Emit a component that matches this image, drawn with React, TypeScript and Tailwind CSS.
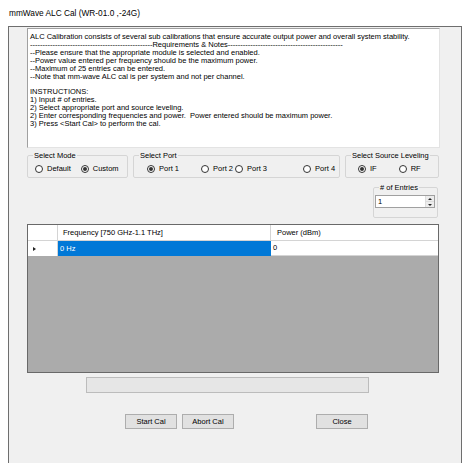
import React from 'react';

const FONT = "font-['Liberation_Sans',Arial,sans-serif]";

const Radio: React.FC<{ checked?: boolean; label: string; className?: string }> = ({ checked, label, className }) => (
  <div className={`flex items-center gap-[4px] shrink-0 whitespace-nowrap ${className ?? ''}`}>
    <span className="w-[8px] h-[8px] rounded-full border border-[#333333] bg-white flex items-center justify-center">
      {checked && <span className="w-[4px] h-[4px] rounded-full bg-[#333333]" />}
    </span>
    <span>{label}</span>
  </div>
);

const Group: React.FC<{ title: string; className?: string; children: React.ReactNode }> = ({ title, className, children }) => (
  <fieldset className={`min-w-0 border border-[#d5d5d5] rounded-[2px] ${className ?? ''}`}>
    <legend className="ml-[5px] px-[1px] leading-[9px] whitespace-nowrap">{title}</legend>
    {children}
  </fieldset>
);

const Button: React.FC<{ label: string; className?: string }> = ({ label, className }) => (
  <button className={`w-[52px] h-[15px] bg-[#e1e1e1] border border-[#adadad] flex items-center justify-center ${className ?? ''}`}>
    {label}
  </button>
);

const notes = [
  'ALC Calibration consists of several sub calibrations that ensure accurate output power and overall system stability.',
  '-'.repeat(49) + 'Requirements & Notes' + '-'.repeat(46),
  '--Please ensure that the appropriate module is selected and enabled.',
  '--Power value entered per frequency should be the maximum power.',
  '--Maximum of 25 entries can be entered.',
  '--Note that mm-wave ALC cal is per system and not per channel.',
  '\u00a0',
  'INSTRUCTIONS:',
  '1) Input # of entries.',
  '2) Select appropriate port and source leveling.',
  '2) Enter corresponding frequencies and power.  Power entered should be maximum power.',
  '3) Press <Start Cal> to perform the cal.',
];

export default function App() {
  return (
    <div className={`w-[470px] h-[463px] bg-white text-[#000000] text-[7.5px] overflow-hidden ${FONT}`}>
      <div className="h-[26px] pl-[9px] pt-[1px] flex items-center text-[8.3px]">mmWave ALC Cal (WR-01.0 ,-24G)</div>
      <div className="ml-[8px] w-[454px] h-[437px] border-t border-l border-r border-[#6e6e6e] bg-[#f0f0f0] pl-[18px] pt-[1px]">
        {/* notes box */}
        <div className="w-[413px] h-[120px] bg-white border-t border-l border-[#a0a0a0] border-r border-b border-r-[#e3e3e3] border-b-[#e3e3e3] pl-[2px] pt-[4px] leading-[7.9px] whitespace-pre overflow-hidden">
          {notes.map((l, i) => (
            <div key={i}>{l}</div>
          ))}
        </div>

        <div className="flex gap-[5px] mt-[3px] w-[412px]">
          <Group title="Select Mode" className="w-[101px] h-[27px] shrink-0">
            <div className="flex pl-[7px] pt-[3px]">
              <Radio label="Default" />
              <Radio label="Custom" checked className="ml-[10px]" />
            </div>
          </Group>
          <Group title="Select Port" className="w-[207px] h-[27px] shrink-0">
            <div className="flex pl-[13px] pt-[3px]">
              <Radio label="Port 1" checked />
              <Radio label="Port 2" className="ml-[22px]" />
              <Radio label="Port 3" className="ml-[2px]" />
              <Radio label="Port 4" className="ml-[36px]" />
            </div>
          </Group>
          <Group title="Select Source Leveling" className="w-[94px] h-[27px] shrink-0">
            <div className="flex pl-[12px] pt-[3px]">
              <Radio label="IF" checked />
              <Radio label="RF" className="ml-[22px]" />
            </div>
          </Group>
        </div>

        <div className="flex justify-end w-[412px] mt-[5px]">
          <Group title="# of Entries" className="w-[65px] h-[35px] mr-[1px]">
            <div className="ml-[1px] mt-[3px] w-[60px] h-[13px] bg-white border border-[#a0a0a0] flex">
              <span className="flex-1 pl-[2px] leading-[11px]">1</span>
              <div className="w-[9px] flex flex-col border-l border-[#dcdcdc] bg-[#ececec]">
                <div className="flex-1 flex items-center justify-center border-b border-[#dcdcdc]">
                  <span className="w-0 h-0 border-l-[2px] border-r-[2px] border-b-[2px] border-l-transparent border-r-transparent border-b-[#222]" />
                </div>
                <div className="flex-1 flex items-center justify-center">
                  <span className="w-0 h-0 border-l-[2px] border-r-[2px] border-t-[2px] border-l-transparent border-r-transparent border-t-[#222]" />
                </div>
              </div>
            </div>
          </Group>
        </div>

        {/* data grid */}
        <div className="mt-[6px] w-[412px] h-[149px] bg-[#ababab] border border-[#696969]">
          <div className="flex h-[16px] bg-white border-b border-[#d4d4d4]">
            <div className="w-[30px] border-r border-[#d4d4d4]" />
            <div className="w-[213px] border-r border-[#d4d4d4] pl-[5px] flex items-center">Frequency [750 GHz-1.1 THz]</div>
            <div className="w-[167px] pl-[6px] flex items-center">Power (dBm)</div>
          </div>
          <div className="flex h-[15px] bg-white">
            <div className="w-[30px] border-r border-[#d4d4d4] flex items-center pl-[5px]">
              <span className="w-0 h-0 border-t-[2.5px] border-b-[2.5px] border-l-[3px] border-t-transparent border-b-transparent border-l-[#222]" />
            </div>
            <div className="w-[213px] bg-[#0078d7] text-white pl-[2px] flex items-center">0 Hz</div>
            <div className="w-[167px] pl-[2px] flex items-center border-b border-[#d4d4d4]">0</div>
          </div>
        </div>

        <div className="ml-[59px] mt-[4px] w-[283px] h-[16px] bg-[#e6e6e6] border border-[#bcbcbc]" />

        <div className="flex mt-[21px] ml-[98px]">
          <Button label="Start Cal" />
          <Button label="Abort Cal" className="ml-[5px]" />
          <Button label="Close" className="ml-[82px]" />
        </div>
      </div>
    </div>
  );
}
